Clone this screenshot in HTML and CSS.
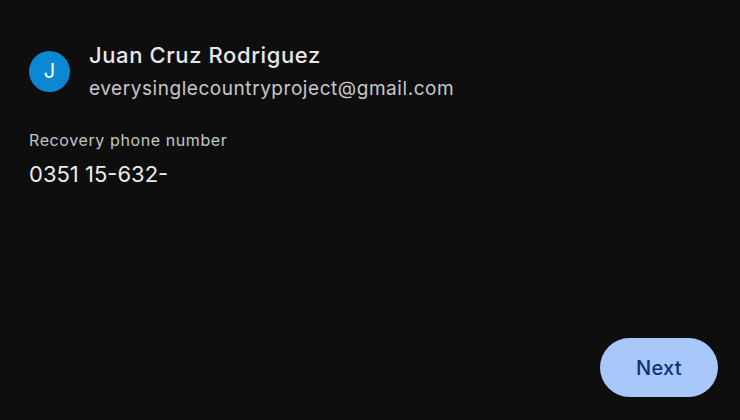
FILE: index.html
```html
<!DOCTYPE html>
<html>
<head>
<meta charset="utf-8">
<link rel="stylesheet" href="styles.css">
</head>
<body>
<div class="page">
  <div class="account">
    <div class="avatar">J</div>
    <div class="who">
      <div class="name">Juan Cruz Rodriguez</div>
      <div class="email">everysinglecountryproject@gmail.com</div>
    </div>
  </div>
  <div class="field">
    <div class="label">Recovery phone number</div>
    <div class="value">0351 15-632-</div>
  </div>
  <div class="actions">
    <button class="next">Next</button>
  </div>
</div>
</body>
</html>
```
FILE: styles.css
```css
html, body {
  margin: 0;
  padding: 0;
  background: #0e0e0e;
  height: 100%;
}
body {
  font-family: Inter, Roboto, "Noto Sans", sans-serif;
  color: #e3e3e3;
}
.page {
  height: 420px;
  box-sizing: border-box;
  padding: 41px 22px 23px 29px;
  display: flex;
  flex-direction: column;
}
.account {
  display: flex;
  align-items: center;
  gap: 19px;
}
.avatar {
  width: 41px;
  height: 41px;
  border-radius: 50%;
  background: #0b87d4;
  color: #ffffff;
  display: flex;
  align-items: center;
  justify-content: center;
  font-size: 20px;
  font-weight: 400;
}
.who {
  display: flex;
  flex-direction: column;
}
.name {
  font-size: 22px;
  font-weight: 500;
  line-height: 28px;
  letter-spacing: 0.6px;
  color: #e8e8e8;
}
.email {
  font-size: 19px;
  line-height: 24px;
  margin-top: 8px;
  letter-spacing: 0.55px;
  color: #c8c8c8;
}
.field {
  margin-top: 29px;
}
.label {
  font-size: 16px;
  line-height: 20px;
  letter-spacing: 0.6px;
  color: #c4c4c4;
}
.value {
  margin-top: 10px;
  font-size: 22px;
  line-height: 28px;
  color: #ececec;
}
.actions {
  margin-top: auto;
  display: flex;
  justify-content: flex-end;
}
.next {
  width: 118px;
  height: 59px;
  border: none;
  border-radius: 30px;
  background: #a8c7fa;
  color: #0b3278;
  font-family: inherit;
  font-size: 20px;
  font-weight: 500;
  letter-spacing: 0.3px;
}
```
